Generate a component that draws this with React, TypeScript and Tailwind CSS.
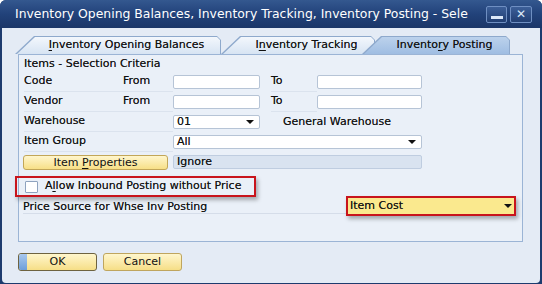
import React from 'react';

function Caret() {
  return (
    <svg width="8" height="4" viewBox="0 0 8 4" className="shrink-0">
      <path d="M0 0 H8 L4 4 Z" fill="#111" />
    </svg>
  );
}

function Field({ className = '', children }: { className?: string; children?: React.ReactNode }) {
  return (
    <div className={`h-[14px] bg-white border border-[#b6c4d6] rounded-[2px] flex items-center px-[3px] ${className}`}>
      {children}
    </div>
  );
}

function Tab({ label, u, active, className = '' }: { label: string; u: number; active?: boolean; className?: string }) {
  return (
    <div
      className={`relative h-[18px] p-[1px] pl-[2px] pb-0 bg-[#8ea9cc] [clip-path:polygon(0_100%,19px_0,calc(100%-4px)_0,100%_4px,100%_100%)] ${className}`}
    >
      <div
        className={`h-full flex items-center justify-center pl-[22px] pr-[6px] text-[11px] text-[#111] [clip-path:polygon(0_100%,18px_0,calc(100%-3px)_0,100%_3px,100%_100%)] ${
          active ? 'bg-gradient-to-b from-[#bcd2ec] to-[#9fbde2]' : 'bg-gradient-to-b from-[#f3f7fc] to-[#d7e4f3]'
        }`}
      >
        <span>
          {label.slice(0, u)}
          <span className="underline underline-offset-2">{label[u]}</span>
          {label.slice(u + 1)}
        </span>
      </div>
    </div>
  );
}

export default function App() {
  return (
    <div className="w-[542px] h-[284px] bg-[#1d3b6e] rounded-t-[6px] flex flex-col font-['DejaVu_Sans',sans-serif] overflow-hidden [text-shadow:0_0_0.3px_rgba(0,0,0,0.6)]">
      {/* Title bar */}
      <div className="h-[28px] flex items-center pl-[15px] pr-[10px] bg-gradient-to-b from-[#34588f] via-[#22427a] to-[#1b3668]">
        <div className="flex-1 text-white text-[12.4px] whitespace-nowrap overflow-hidden [text-shadow:none]">
          Inventory Opening Balances, Inventory Tracking, Inventory Posting - Sele
        </div>
        <div className="flex gap-[3px] ml-[3px]">
          <div className="w-[21px] h-[17px] rounded-[2px] border border-[#6f8fc2] bg-gradient-to-b from-[#3c5f98] to-[#223f73] flex items-end justify-center pb-[3px]">
            <div className="w-[12px] h-[3px] bg-[#dce8f8]" />
          </div>
          <div className="w-[22px] h-[17px] rounded-[2px] border border-[#6f8fc2] bg-gradient-to-b from-[#3c5f98] to-[#223f73] flex items-center justify-center text-[#dce8f8] text-[12px] font-bold leading-none [text-shadow:none]">
            ✕
          </div>
        </div>
      </div>

      {/* Body */}
      <div className="flex-1 mx-[2px] mb-[1px] bg-[#e4ebf5] rounded-b-[4px] flex flex-col">
        {/* Tabs */}
        <div className="flex pt-[8px] pl-[13px]">
          <Tab label="Inventory Opening Balances" u={0} className="w-[206px]" />
          <Tab label="Inventory Tracking" u={1} className="w-[154px]" />
          <Tab label="Inventory Posting" u={7} active className="w-[148px] -ml-[13px] z-10" />
        </div>

        {/* Panel */}
        <div className="ml-[16px] w-[505px] h-[188px] bg-[#eaf0f8] border border-[#9bb4d5] flex flex-col text-[11px] text-[#111]">
          <div className="h-[15px] mt-[2px] pl-[5px] flex items-center">Items - Selection Criteria</div>

          {[['Code'], ['Vendor']].map(([name]) => (
            <div key={name} className="h-[20px] flex items-center pl-[5px]">
              <div className="w-[149px] h-full flex items-center border-b border-[#dbe3ee]">
                <span className="w-[99px]">{name}</span>
                <span>From</span>
              </div>
              <Field className="w-[87px]" />
              <span className="w-[46px] ml-[11px] h-full flex items-center border-b border-[#dbe3ee]">To</span>
              <Field className="w-[105px]" />
            </div>
          ))}

          <div className="h-[20px] flex items-center pl-[5px]">
            <span className="w-[149px] h-full flex items-center border-b border-[#dbe3ee]">Warehouse</span>
            <Field className="w-[87px] justify-between pr-[5px]">
              <span>01</span>
              <Caret />
            </Field>
            <span className="ml-[23px]">General Warehouse</span>
          </div>

          <div className="h-[20px] flex items-center pl-[5px]">
            <span className="w-[149px] h-full flex items-center border-b border-[#dbe3ee]">Item Group</span>
            <Field className="w-[249px] justify-between pr-[5px]">
              <span>All</span>
              <Caret />
            </Field>
          </div>

          <div className="h-[20px] flex items-center pl-[4px]">
            <button className="w-[145px] h-[15px] mr-[5px] rounded-[3px] border border-[#c2a658] bg-gradient-to-b from-[#fff6cc] to-[#f7df86] text-[11px] leading-none flex items-center justify-center">
              <span>
                Item <span className="underline underline-offset-2">P</span>roperties
              </span>
            </button>
            <div className="w-[249px] h-[14px] bg-[#d9e3f0] border border-[#bfcde0] rounded-[2px] flex items-center px-[3px]">
              Ignore
            </div>
          </div>

          <div className="mt-[4px] -ml-[4px] w-[241px] h-[21px] border-2 border-[#c8141c] shadow-[2px_3px_4px_rgba(0,0,0,0.3)] flex items-center pl-[8px]">
            <div className="w-[13px] h-[12px] bg-white border border-[#8fa3bf] rounded-[1px]" />
            <span className="ml-[7px] whitespace-nowrap">
              A<span className="underline underline-offset-2">l</span>low Inbound Posting without Price
            </span>
          </div>

          <div className="h-[20px] -mt-[1px] flex items-center pl-[4px]">
            <span className="w-[323px] h-[15px] flex items-start border-b border-[#d5dde9]">Price Source for Whse Inv Posting</span>
            <div className="w-[170px] h-[20px] border-2 border-[#c8141c] shadow-[2px_3px_4px_rgba(0,0,0,0.3)] bg-[#fae98e] flex items-center justify-between pl-[2px] pr-[2px]">
              <span>Item Cost</span>
              <Caret />
            </div>
          </div>
        </div>

        {/* Buttons */}
        <div className="flex gap-[6px] pl-[16px] pt-[11px] text-[11px] text-[#111]">
          <button className="relative w-[79px] h-[18px] rounded-[3px] border border-[#6e6340] bg-gradient-to-b from-[#fff6cc] to-[#f6de86] flex items-center justify-center overflow-hidden">
            <div className="absolute left-0 top-0 bottom-0 w-[8px] bg-gradient-to-b from-[#a9c8ee] to-[#6e9fd9]" />
            OK
          </button>
          <button className="w-[79px] h-[18px] rounded-[3px] border border-[#bfa55e] bg-gradient-to-b from-[#fff6cc] to-[#f6de86] flex items-center justify-center">
            Cancel
          </button>
        </div>
      </div>
    </div>
  );
}
